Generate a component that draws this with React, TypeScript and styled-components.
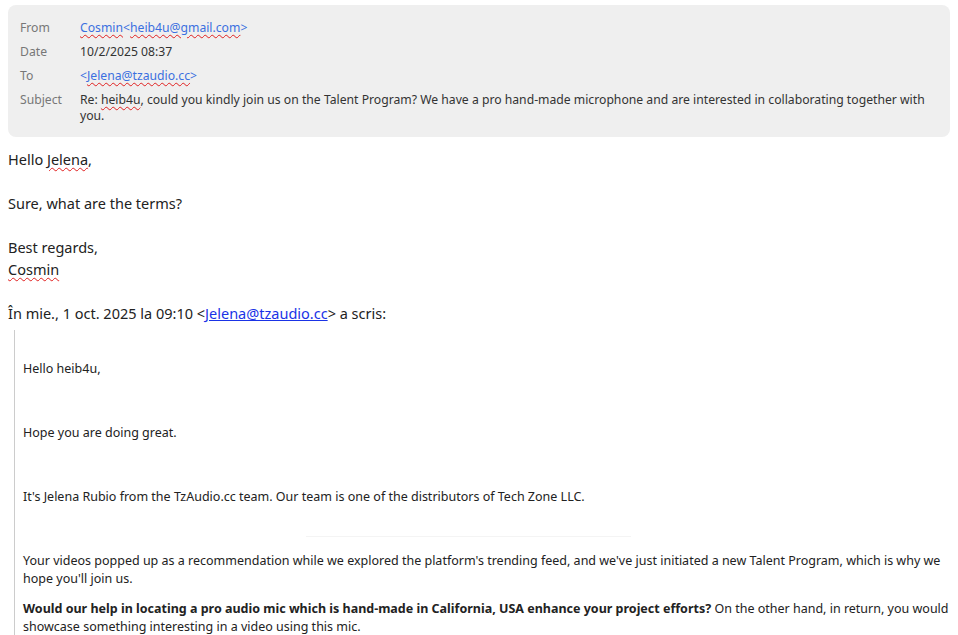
import React from 'react'
import styled, { createGlobalStyle } from 'styled-components'

const GlobalStyle = createGlobalStyle`
  html, body {
    margin: 0;
    padding: 0;
    background: #ffffff;
  }
  body {
    font-family: 'Noto Sans', 'Open Sans', sans-serif;
    color: #222;
  }
`

const headerRows = [
  { label: 'From', value: 'from' },
  { label: 'Date', value: 'date' },
  { label: 'To', value: 'to' },
  { label: 'Subject', value: 'subject' },
]

const App: React.FC = () => {
  const renderValue = (key: string) => {
    switch (key) {
      case 'from':
        return (
          <HeaderLink>
            <Misspelled>Cosmin</Misspelled>&lt;<Misspelled>heib4u@gmail.com</Misspelled>&gt;
          </HeaderLink>
        )
      case 'date':
        return '10/2/2025 08:37'
      case 'to':
        return (
          <HeaderLink>
            &lt;<Misspelled>Jelena@tzaudio.cc</Misspelled>&gt;
          </HeaderLink>
        )
      default:
        return (
          <>
            Re: <Misspelled>heib4u</Misspelled>, could you kindly join us on the Talent
            Program? We have a pro hand-made microphone and are interested in
            collaborating together with you.
          </>
        )
    }
  }

  return (
    <Page>
      <GlobalStyle />
      <HeaderCard>
        {headerRows.map((row) => (
          <HeaderRow key={row.label}>
            <HeaderLabel>{row.label}</HeaderLabel>
            <HeaderValue>{renderValue(row.value)}</HeaderValue>
          </HeaderRow>
        ))}
      </HeaderCard>

      <Reply>
        <Line>
          Hello <Misspelled>Jelena</Misspelled>,
        </Line>
        <Line>&nbsp;</Line>
        <Line>Sure, what are the terms?</Line>
        <Line>&nbsp;</Line>
        <Line>Best regards,</Line>
        <Line>
          <Misspelled>Cosmin</Misspelled>
        </Line>
        <Line>&nbsp;</Line>
        <Line>
          În mie., 1 oct. 2025 la 09:10 &lt;
          <BodyLink href="#">Jelena@tzaudio.cc</BodyLink>&gt; a scris:
        </Line>
      </Reply>

      <Quote>
        <QuotePara>Hello heib4u,</QuotePara>
        <QuoteSpacer />
        <QuotePara>Hope you are doing great.</QuotePara>
        <QuoteSpacer />
        <QuotePara>
          It's Jelena Rubio from the TzAudio.cc team. Our team is one of the
          distributors of Tech Zone LLC.
        </QuotePara>
        <QuoteSpacer>
          <FaintRule />
        </QuoteSpacer>
        <QuotePara>
          Your videos popped up as a recommendation while we explored the
          platform's trending feed, and we've just initiated a new Talent
          Program, which is why we hope you'll join us.
        </QuotePara>
        <QuotePara $tight>
          <strong>
            Would our help in locating a pro audio mic which is hand-made in
            California, USA enhance your project efforts?
          </strong>{' '}
          On the other hand, in return, you would showcase something
          interesting in a video using this mic.
        </QuotePara>
      </Quote>
    </Page>
  )
}

const Page = styled.div`
  padding: 5px 8px 0 8px;
  width: 942px;
  box-sizing: content-box;
`

const HeaderCard = styled.div`
  background-color: #efefef;
  border-radius: 8px;
  padding: 11px 10px 9px 12px;
  display: flex;
  flex-direction: column;
`

const HeaderRow = styled.div`
  display: grid;
  grid-template-columns: 60px 1fr;
  font-size: 12.2px;
  line-height: 16px;
  padding: 4px 0;
`

const HeaderLabel = styled.div`
  color: #777;
`

const HeaderValue = styled.div`
  color: #333;
`

const HeaderLink = styled.span`
  color: #3b6fe0;
`

const Misspelled = styled.span`
  text-decoration: underline wavy #e02020;
  text-decoration-thickness: 1px;
  text-underline-offset: 2px;
`

const Reply = styled.div`
  padding-top: 11px;
  font-size: 14.5px;
  line-height: 22px;
  color: #222;
`

const Line = styled.div``

const BodyLink = styled.a`
  color: #1a33e6;
  text-decoration: underline;
`

const Quote = styled.div`
  margin: 6px 0 0 6px;
  border-left: 1px solid #cccccc;
  padding: 30px 0 0 8px;
  font-size: 12.5px;
  line-height: 18px;
  color: #222;
`

const QuotePara = styled.p<{ $tight?: boolean }>`
  margin: ${(p) => (p.$tight ? '12px 0 0 0' : '0')};
`

const QuoteSpacer = styled.div`
  height: 46px;
  display: flex;
  align-items: flex-end;
  justify-content: center;
`

const FaintRule = styled.div`
  width: 325px;
  height: 1px;
  background: #f4f4f4;
  margin: 0 0 15px -36px;
`

export default App
